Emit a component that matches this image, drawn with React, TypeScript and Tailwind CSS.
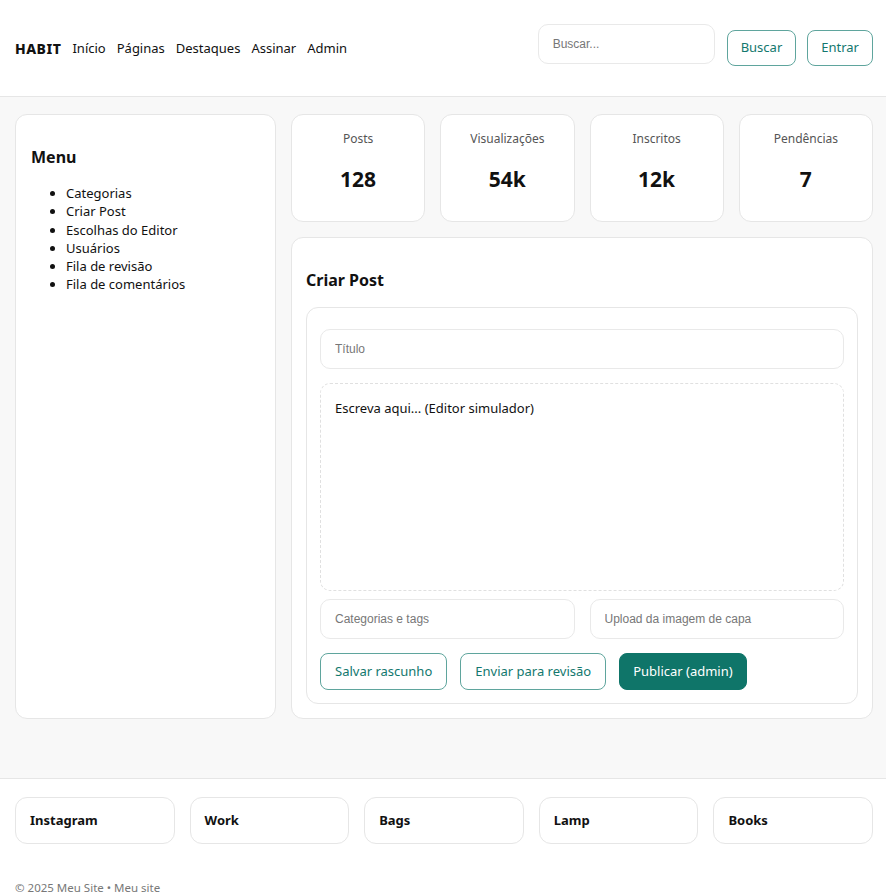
import React from 'react'

const stats = [
  { label: 'Posts', value: '128' },
  { label: 'Visualizações', value: '54k' },
  { label: 'Inscritos', value: '12k' },
  { label: 'Pendências', value: '7' },
]

const menuItems = [
  'Categorias',
  'Criar Post',
  'Escolhas do Editor',
  'Usuários',
  'Fila de revisão',
  'Fila de comentários',
]

const footerLinks = ['Instagram', 'Work', 'Bags', 'Lamp', 'Books']

const inputCls =
  'h-[40px] w-full rounded-[10px] border border-[#e9e9e9] bg-white px-[14px] text-[12px] text-[#333] placeholder:text-[#777] outline-none [font-family:"Liberation_Sans",Arial,sans-serif]'

const outlineBtn =
  'h-[37px] rounded-[8px] border border-[#5fa59d] px-[14px] text-[13px] text-[#13786e]'

export default function App() {
  return (
    <div className="min-h-screen bg-white text-[#111] [font-family:'Noto_Sans',sans-serif]">
      {/* Header */}
      <header className="flex h-[97px] items-center justify-between border-b border-[#e6e6e6] bg-white pl-[15px] pr-[13px]">
        <nav className="mt-[1px] flex items-center gap-[11px] text-[13px]">
          <span className="text-[14px] font-extrabold tracking-[0.5px]">HABIT</span>
          <a>Início</a>
          <a>Páginas</a>
          <a>Destaques</a>
          <a>Assinar</a>
          <a>Admin</a>
        </nav>
        <div className="flex items-center">
          <input placeholder="Buscar..." className={inputCls + ' !w-[177px] -mt-[8px]'} />
          <button className="ml-[12px] h-[36px] rounded-[8px] border border-[#5fa59d] px-[13px] text-[13px] text-[#13786e]">
            Buscar
          </button>
          <button className="ml-[11px] h-[36px] rounded-[8px] border border-[#5fa59d] px-[13px] text-[13px] text-[#13786e]">
            Entrar
          </button>
        </div>
      </header>

      {/* Main */}
      <main className="grid grid-cols-[261px_1fr] gap-[15px] bg-[#f8f8f8] pl-[15px] pr-[13px] pt-[17px] pb-[59px]">
        <aside className="rounded-[12px] border border-[#e6e6e6] bg-white p-[15px]">
          <h2 className="mt-[16px] text-[16px] font-bold leading-[22px]">Menu</h2>
          <ul className="mt-[16px] list-disc pl-[35px] text-[13px] leading-[18.3px]">
            {menuItems.map((m) => (
              <li key={m}>{m}</li>
            ))}
          </ul>
        </aside>

        <div className="flex flex-col gap-[15px]">
          <div className="grid grid-cols-4 gap-[15px]">
            {stats.map((s) => (
              <div
                key={s.label}
                className="h-[108px] rounded-[12px] border border-[#e6e6e6] bg-white px-[15px] pt-[16px] text-center"
              >
                <div className="text-[12px] leading-[16px] text-[#555]">{s.label}</div>
                <div className="mt-[18px] text-[21px] font-bold leading-[28px]">{s.value}</div>
              </div>
            ))}
          </div>

          <section className="rounded-[12px] border border-[#e6e6e6] bg-white p-[14px]">
            <h2 className="mt-[17px] text-[16px] font-bold leading-[22px]">Criar Post</h2>
            <div className="mt-[16px] rounded-[12px] border border-[#e6e6e6] px-[13px] pt-[21px] pb-[13px]">
              <input placeholder="Título" className={inputCls} />
              <div className="mt-[14px] h-[208px] rounded-[10px] border border-dashed border-[#e0e0e0] px-[14px] pt-[14px] text-[13px] leading-[20px]">
                Escreva aqui... (Editor simulador)
              </div>
              <div className="mt-[8px] grid grid-cols-2 gap-[15px]">
                <input placeholder="Categorias e tags" className={inputCls} />
                <input placeholder="Upload da imagem de capa" className={inputCls} />
              </div>
              <div className="mt-[14px] flex gap-[13px]">
                <button className={outlineBtn}>Salvar rascunho</button>
                <button className={outlineBtn}>Enviar para revisão</button>
                <button className="h-[37px] rounded-[8px] border border-[#0f7569] bg-[#0f7569] px-[13px] text-[13px] text-white">
                  Publicar (admin)
                </button>
              </div>
            </div>
          </section>
        </div>
      </main>

      {/* Footer */}
      <footer className="border-t border-[#e6e6e6] bg-white pl-[15px] pr-[13px] pt-[18px]">
        <div className="grid grid-cols-5 gap-[15px]">
          {footerLinks.map((f) => (
            <div
              key={f}
              className="flex h-[47px] items-center rounded-[12px] border border-[#e6e6e6] px-[14px] text-[13px] font-bold"
            >
              {f}
            </div>
          ))}
        </div>
        <p className="mt-[36px] pb-[10px] text-[11.5px] leading-[16px] text-[#777]">
          © 2025 Meu Site • Meu site
        </p>
      </footer>
    </div>
  )
}
